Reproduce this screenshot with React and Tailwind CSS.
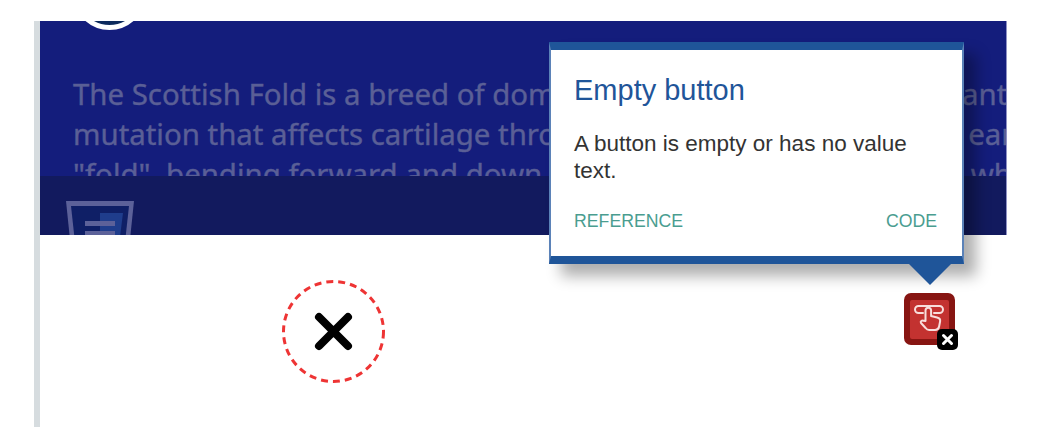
const TEXT_LINES = [
  'The Scottish Fold is a breed of domestic cat with a natural dominant',
  'mutation that affects cartilage throughout the body, causing the ears to',
  '"fold", bending forward and down towards the front of the head, which',
];

function TouchIcon() {
  return (
    <svg viewBox="0 0 39 39" className="h-[39px] w-[39px]" fill="none" stroke="#f8dedc" strokeWidth="2" strokeLinecap="round" strokeLinejoin="round">
      <path d="M13 13H8.500a3.500 3.500 0 0 1 0-7h21a3.500 3.500 0 0 1 0 7H24" />
      <path d="M15.500 21V10.500a2.800 2.800 0 0 1 5.600 0V16l6 1.500c2 .5 3.400 2 3 4l-1 5c-.4 2-2 3.500-4 3.500h-6c-1.500 0-2.500-.6-3.500-2L11 23c-1-1.500 1-3.200 2.500-2.200Z" />
    </svg>
  );
}

function ShieldIcon() {
  return (
    <svg viewBox="0 0 68 70" className="h-[70px] w-[68px]">
      <path d="M0 0H68L62 58 34 70 6 58Z" fill="#5c6199" />
      <path d="M5 5H63L57.500 55 34 65 10.500 55Z" fill="#0f1f66" />
      <path d="M34 12H57L52 52 34 59Z" fill="#1f3d8c" />
      <path d="M19 20H49V25H19ZM19 30H49V36H19Z" fill="#5c6199" />
    </svg>
  );
}

function Popover() {
  return (
    <div className="absolute left-[549px] top-[42px] w-[415px]">
      <div className="h-[222px] border-x-2 border-y-8 border-[#1f5599] border-x-[#5b82b8] bg-white pl-[23px] pr-[25px] pt-[22px] shadow-[12px_12px_14px_rgba(0,0,0,0.32)]">
        <h2 className="text-[29px] leading-[36px] text-[#1f5599]">Empty button</h2>
        <p className="mt-[22px] text-[22.500px] leading-[27px] text-[#333333]">A button is empty or has no value text.</p>
        <div className="mt-[25px] flex justify-between text-[17.700px] leading-[24px] text-[#4a9d90]">
          <span>REFERENCE</span>
          <span>CODE</span>
        </div>
      </div>
      <div className="ml-[360px] h-0 w-0 border-x-[21px] border-t-[21px] border-x-transparent border-t-[#1f5599]" />
    </div>
  );
}

export default function App() {
  return (
    <div className="relative h-[448px] bg-white font-['Liberation_Sans',sans-serif]">
      <div className="absolute left-[34px] top-[21px] h-[406px] w-[973px] border-l-[6px] border-[#d6dcdf]">
        <div className="h-[214px] overflow-hidden border-r border-[#8f92c4] bg-[#141d7c]">
          <div className="h-[155px] overflow-hidden">
            <div className="ml-[33px] mt-[-64px] h-[73px] w-[73px] rounded-full border-[5px] border-white bg-[#0c2a5c]" />
            <div className="mt-[44px] whitespace-nowrap pl-[33px] font-['Noto_Sans',sans-serif] text-[29.400px] leading-[40px] text-[#5a5f96] [-webkit-text-stroke:0.4px_#5a5f96]">
              {TEXT_LINES.map((line) => <div key={line}>{line}</div>)}
            </div>
          </div>
          <div className="h-[59px] overflow-hidden bg-[#121a5e] pl-[26px] pt-[25px]">
            <ShieldIcon />
          </div>
        </div>
        <div className="flex items-start pl-[242px] pt-[45px]">
          <div className="relative h-[103px] w-[103px]">
            <svg viewBox="0 0 103 103" className="h-[103px] w-[103px]" fill="none">
              <circle cx="51.500" cy="51.500" r="50" stroke="#ee3434" strokeWidth="3" strokeDasharray="7 5" />
              <path d="M37 37L66 66M66 37L37 66" stroke="#000000" strokeWidth="8" strokeLinecap="round" />
            </svg>
          </div>
          <div className="relative ml-[519px] mt-[13px] flex h-[52px] w-[51px] items-center justify-center rounded-[7px] bg-[#871512]">
            <div className="flex h-[39px] w-[39px] items-center justify-center rounded-[2px] bg-[#c33230]">
              <TouchIcon />
            </div>
            <div className="absolute left-[33px] top-[36px] flex h-[21px] w-[21px] items-center justify-center rounded-[5px] bg-black">
              <svg viewBox="0 0 21 21" className="h-[21px] w-[21px]">
                <path d="M6.500 6.500L14.500 14.500M14.500 6.500L6.500 14.500" stroke="#ffffff" strokeWidth="3" strokeLinecap="round" />
              </svg>
            </div>
          </div>
        </div>
      </div>
      <Popover />
    </div>
  );
}
